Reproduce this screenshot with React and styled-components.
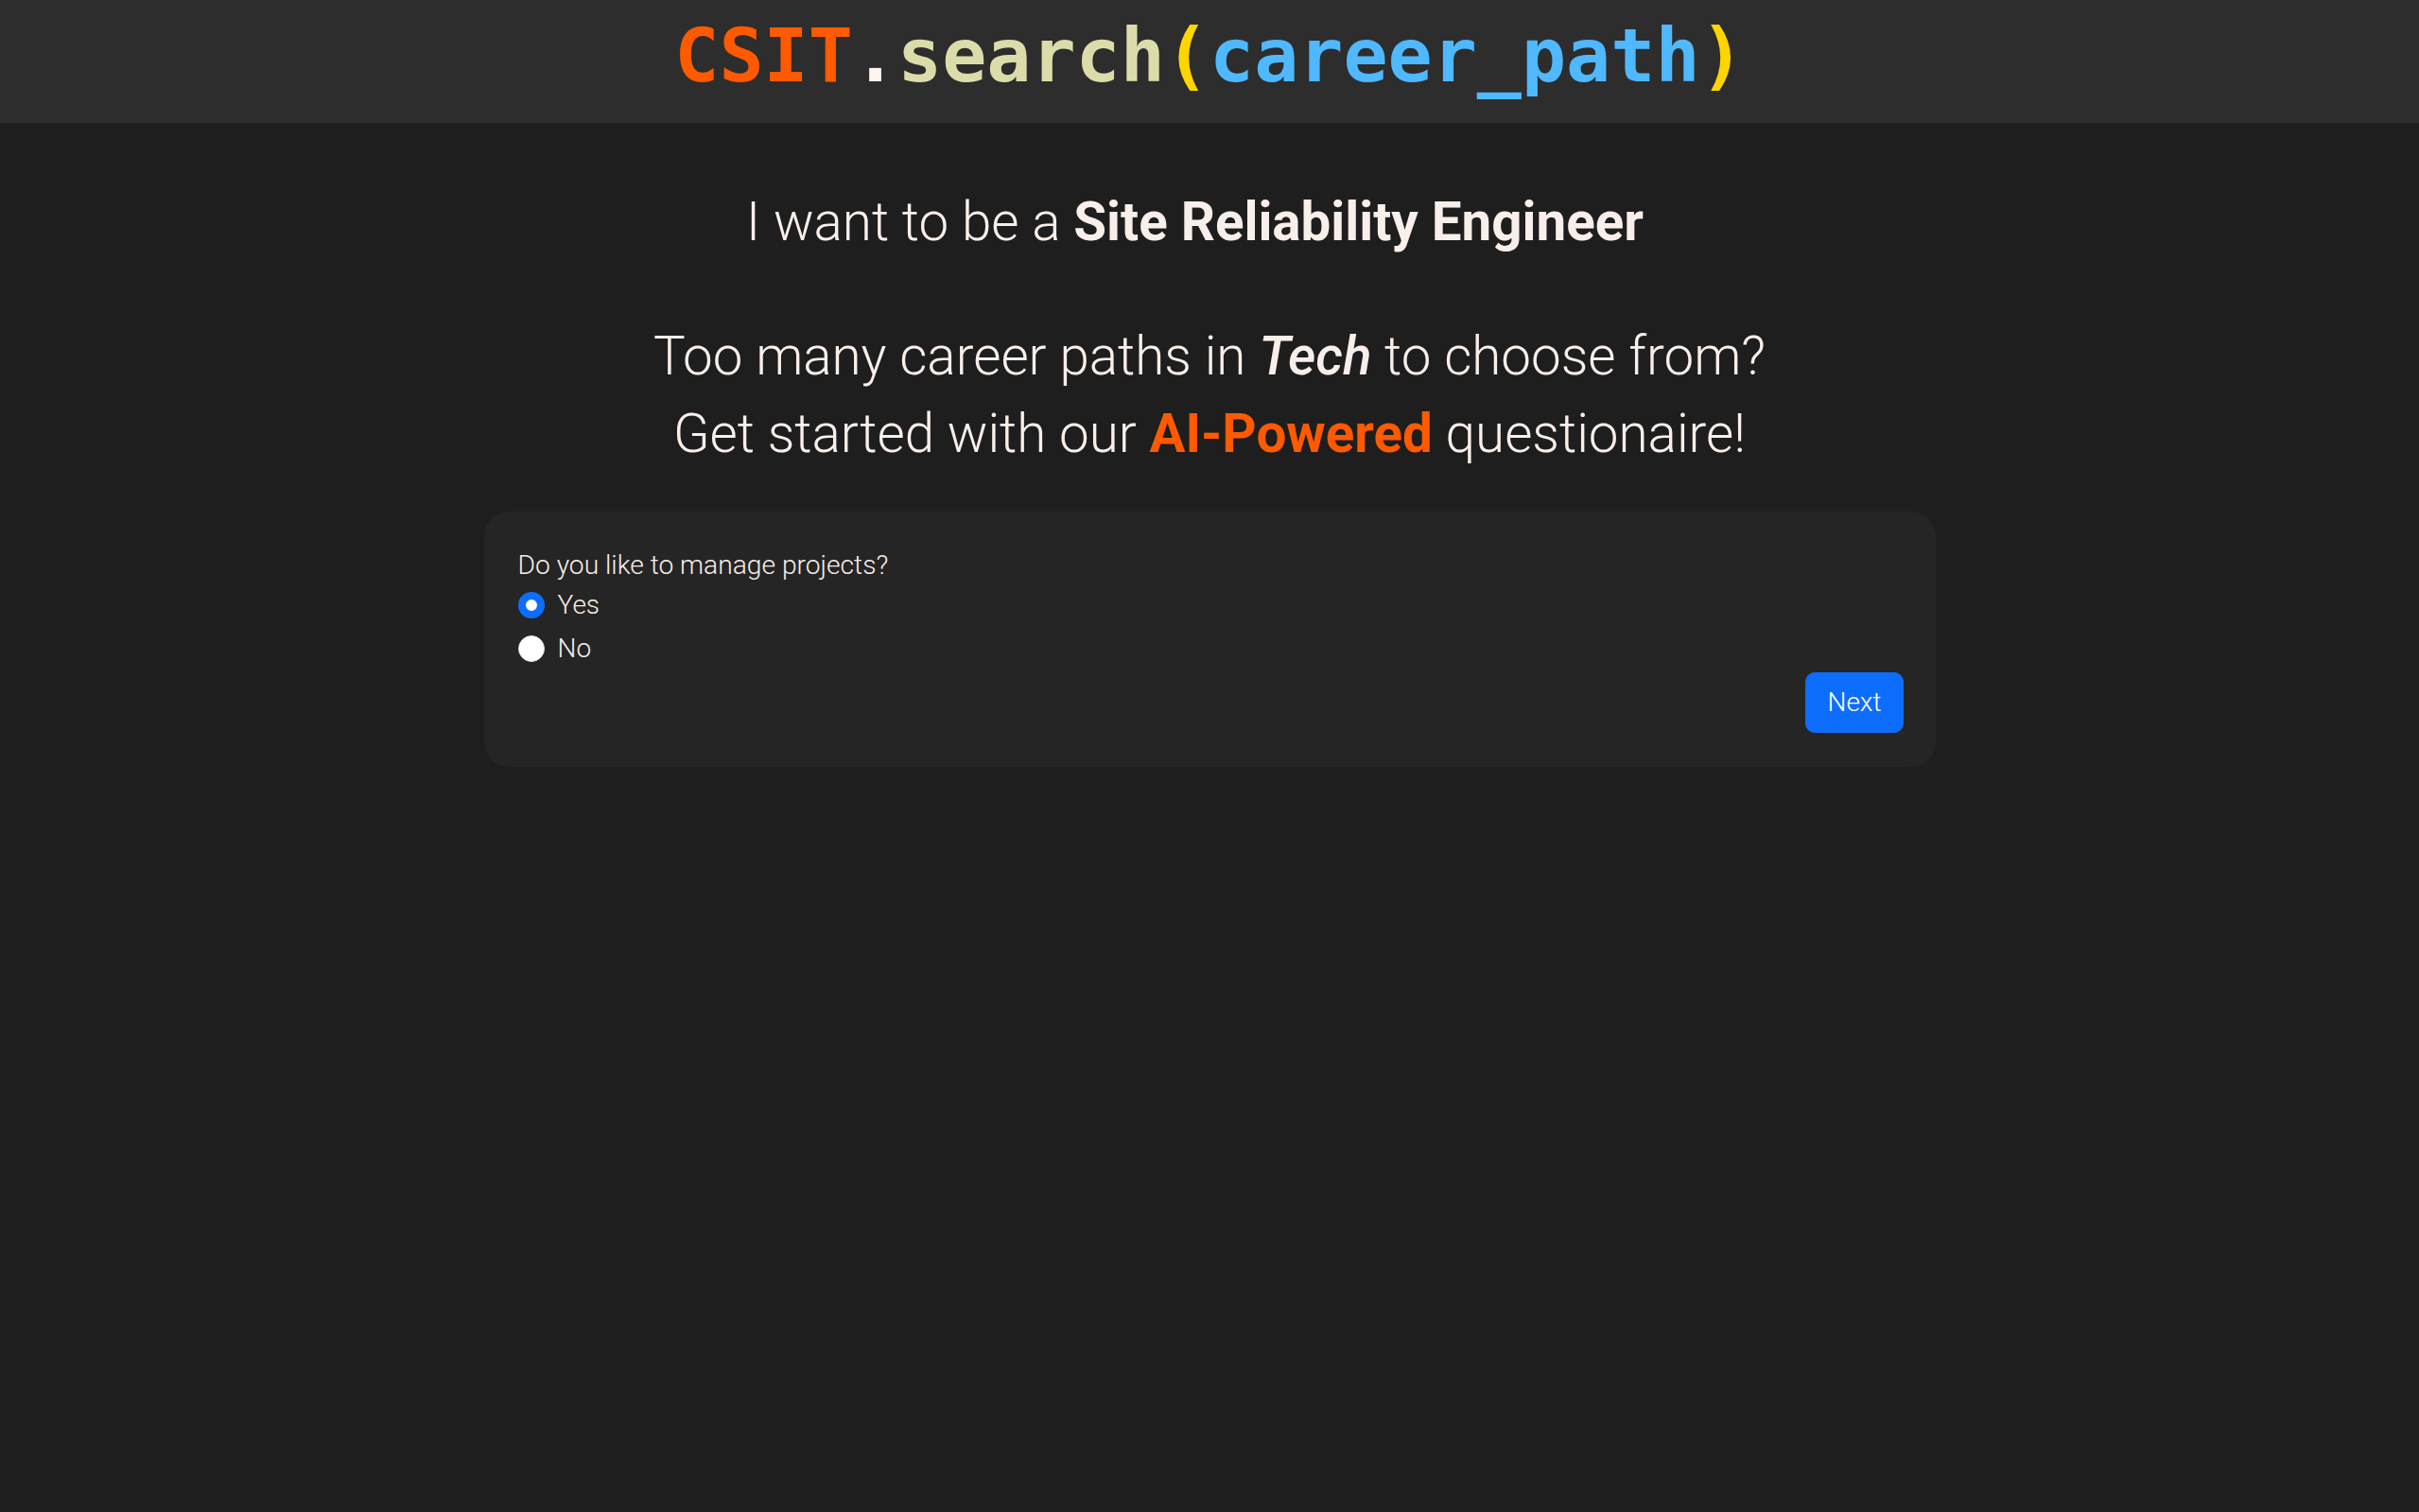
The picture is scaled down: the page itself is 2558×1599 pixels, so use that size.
import React, { useState } from "react";
import styled, { createGlobalStyle, keyframes } from "styled-components";

const GlobalStyle = createGlobalStyle`
  html, body {
    margin: 0;
    padding: 0;
    background: #1e1e1e;
    font-family: Roboto, "Noto Sans", sans-serif;
    font-weight: 300;
    color: #f9efea;
  }
  * { box-sizing: border-box; }
`;

const Page = styled.div`
  min-height: 1599px;
  background: #1e1e1e;
  display: flex;
  flex-direction: column;
`;

const Header = styled.header`
  height: 130px;
  background: #2d2d2d;
  display: flex;
  align-items: center;
  justify-content: center;
`;

const Logo = styled.h1`
  margin: 0;
  font-family: "DejaVu Sans Mono", "Liberation Mono", monospace;
  font-weight: 700;
  font-size: 78.3px;
  line-height: 1;
  letter-spacing: 0;
  padding-bottom: 12px;
`;

const Tok = styled.span`
  color: ${(p) => p.$c};
`;

const Main = styled.main`
  display: flex;
  flex-direction: column;
  align-items: center;
  padding-top: 62px;
`;

const Aspire = styled.h2`
  margin: 0;
  font-size: 56.5px;
  font-weight: 300;
  line-height: 87px;
  text-align: center;
  b { font-weight: 700; }
`;

const Caret = styled.span`
  display: inline-block;
  width: 31px;
  visibility: hidden;
`;

const Pitch = styled.p`
  margin: 57px 0 0;
  font-size: 56.5px;
  font-weight: 300;
  line-height: 82px;
  text-align: center;
  em { font-style: italic; font-weight: 500; }
`;

const Accent = styled.b`
  color: #ff5a00;
  font-weight: 700;
`;

const Card = styled.form`
  margin-top: 41px;
  width: 1535px;
  background: #252525;
  border-radius: 26px;
  padding: 36px 34px 36px 36px;
  display: flex;
  flex-direction: column;
  font-size: 28px;
  line-height: 42px;
`;

const Question = styled.div`
  font-size: 28.2px;
`;

const Option = styled.label`
  display: flex;
  align-items: center;
  gap: 14px;
  height: 42px;
  margin-bottom: 4px;
  cursor: pointer;
`;

const Radio = styled.span`
  width: 28px;
  height: 28px;
  border-radius: 50%;
  background: #fff;
  border: ${(p) => (p.$on ? "8px solid #0d6efd" : "1px solid #dee2e6")};
  flex: none;
`;

const Actions = styled.div`
  display: flex;
  justify-content: flex-end;
`;

const Button = styled.button`
  font-family: Roboto, sans-serif;
  font-weight: 300;
  font-size: 28px;
  line-height: 42px;
  color: #fff;
  background: #0d6efd;
  border: 1px solid #0d6efd;
  border-radius: 10px;
  padding: 10px 22px;
  cursor: pointer;
`;

export default function App() {
  const [val, setVal] = useState("yes");
  return (
    <>
      <GlobalStyle />
      <Page>
        <Header>
          <Logo>
            <Tok $c="#ff5a00">CSIT</Tok>
            <Tok $c="#fff4ef">.</Tok>
            <Tok $c="#dcdcaa">search</Tok>
            <Tok $c="#ffd500">(</Tok>
            <Tok $c="#4fb8ff">career_path</Tok>
            <Tok $c="#ffd500">)</Tok>
          </Logo>
        </Header>
        <Main>
          <Aspire>
            I want to be a <b>Site Reliability Engineer</b>
            <Caret aria-hidden="true">|</Caret>
          </Aspire>
          <Pitch>
            Too many career paths in <em>Tech</em> to choose from?
            <br />
            Get started with our <Accent>AI-Powered</Accent> questionaire!
          </Pitch>
          <Card onSubmit={(e) => e.preventDefault()}>
            <Question>Do you like to manage projects?</Question>
            <Option onClick={() => setVal("yes")}>
              <Radio $on={val === "yes"} />
              Yes
            </Option>
            <Option onClick={() => setVal("no")}>
              <Radio $on={val === "no"} />
              No
            </Option>
            <Actions>
              <Button type="submit">Next</Button>
            </Actions>
          </Card>
        </Main>
      </Page>
    </>
  );
}
